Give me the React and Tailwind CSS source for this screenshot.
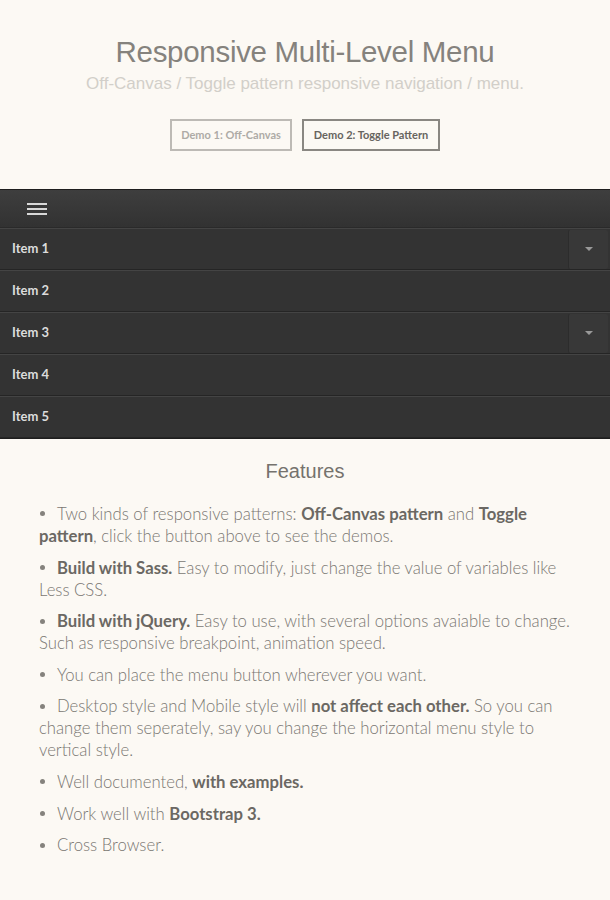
import React from "react";

const items = [
  { label: "Item 1", toggle: true },
  { label: "Item 2" },
  { label: "Item 3", toggle: true },
  { label: "Item 4" },
  { label: "Item 5" },
];

const B = ({ children }) => <b className="font-bold text-[#6b6863]">{children}</b>;

const Li = ({ children }) => (
  <li className="mb-[9.6px]">
    <span className="inline-block w-[5px] h-[5px] rounded-full bg-[#85827d] align-middle ml-[1px] mr-[12px] relative top-[-2px]" />
    {children}
  </li>
);

export default function App() {
  return (
    <div className="min-h-[900px] bg-[#fcf9f4] w-full">
      <header className="pt-[35px] pb-[38px] text-center" style={{ fontFamily: "'Liberation Sans', Arial, sans-serif" }}>
        <h1 className="text-[29.5px] leading-[34px] font-normal text-[#85827d] tracking-[-0.3px]">Responsive Multi-Level Menu</h1>
        <p className="text-[17px] leading-[22px] text-[#d2cfc9] mt-[4px]">Off-Canvas / Toggle pattern responsive navigation / menu.</p>
        <div className="flex justify-center gap-[10px] mt-[24px]" style={{ fontFamily: "Lato, sans-serif" }}>
          <a className="block w-[122px] h-[32px] border-2 border-[#bdbab5] text-[#aeaba6] text-[11px] font-bold leading-[28px]">Demo 1: Off-Canvas</a>
          <a className="block w-[138px] h-[32px] border-2 border-[#8a8782] text-[#67645f] text-[11px] font-bold leading-[28px]">Demo 2: Toggle Pattern</a>
        </div>
      </header>

      <nav className="bg-[#333] border-t border-[#1e1e1e]" style={{ fontFamily: "Lato, sans-serif" }}>
        <div className="h-[38px] bg-gradient-to-b from-[#3e3e3e] to-[#323232] flex items-center pl-[27px] border-b border-[#2a2a2a]">
          <div className="flex flex-col gap-[3px]">
            <span className="block w-[20px] h-[2px] bg-[#d8d8d8]" />
            <span className="block w-[20px] h-[2px] bg-[#d8d8d8]" />
            <span className="block w-[20px] h-[2px] bg-[#d8d8d8]" />
          </div>
        </div>
        {items.map((it) => (
          <div key={it.label} className="h-[42px] bg-[#333] border-t border-[#444] border-b border-b-[#252525] flex items-center justify-between">
            <span className="pl-[12px] text-[13px] font-bold text-[#dcdcdc]">{it.label}</span>
            {it.toggle && (
              <div className="w-[40px] h-[39px] mr-[2px] bg-[#383838] border-l border-[#2c2c2c] flex items-center justify-center rounded-[2px]">
                <span className="block w-0 h-0 border-l-[4px] border-r-[4px] border-t-[4px] border-l-transparent border-r-transparent border-t-[#999]" />
              </div>
            )}
          </div>
        ))}
        <div className="h-[1px] bg-[#1e1e1e]" />
      </nav>

      <section className="pt-[20px] pb-[40px]">
        <h2 className="text-center text-[20px] leading-[24px] text-[#75726d]" style={{ fontFamily: "'Liberation Sans', Arial, sans-serif" }}>Features</h2>
        <ul className="list-none pl-[39px] pr-[30px] mt-[20px] text-[16.7px] leading-[22px] font-light text-[#7a7772]" style={{ fontFamily: "Lato, sans-serif" }}>
          <Li>Two kinds of responsive patterns: <B>Off-Canvas pattern</B> and <B>Toggle pattern</B>, click the button above to see the demos.</Li>
          <Li><B>Build with Sass.</B> Easy to modify, just change the value of variables like Less CSS.</Li>
          <Li><B>Build with jQuery.</B> Easy to use, with several options avaiable to change. Such as responsive breakpoint, animation speed.</Li>
          <Li>You can place the menu button wherever you want.</Li>
          <Li>Desktop style and Mobile style will <B>not affect each other.</B> So you can change them seperately, say you change the horizontal menu style to vertical style.</Li>
          <Li>Well documented, <B>with examples.</B></Li>
          <Li>Work well with <B>Bootstrap 3.</B></Li>
          <Li>Cross Browser.</Li>
        </ul>
      </section>
    </div>
  );
}
